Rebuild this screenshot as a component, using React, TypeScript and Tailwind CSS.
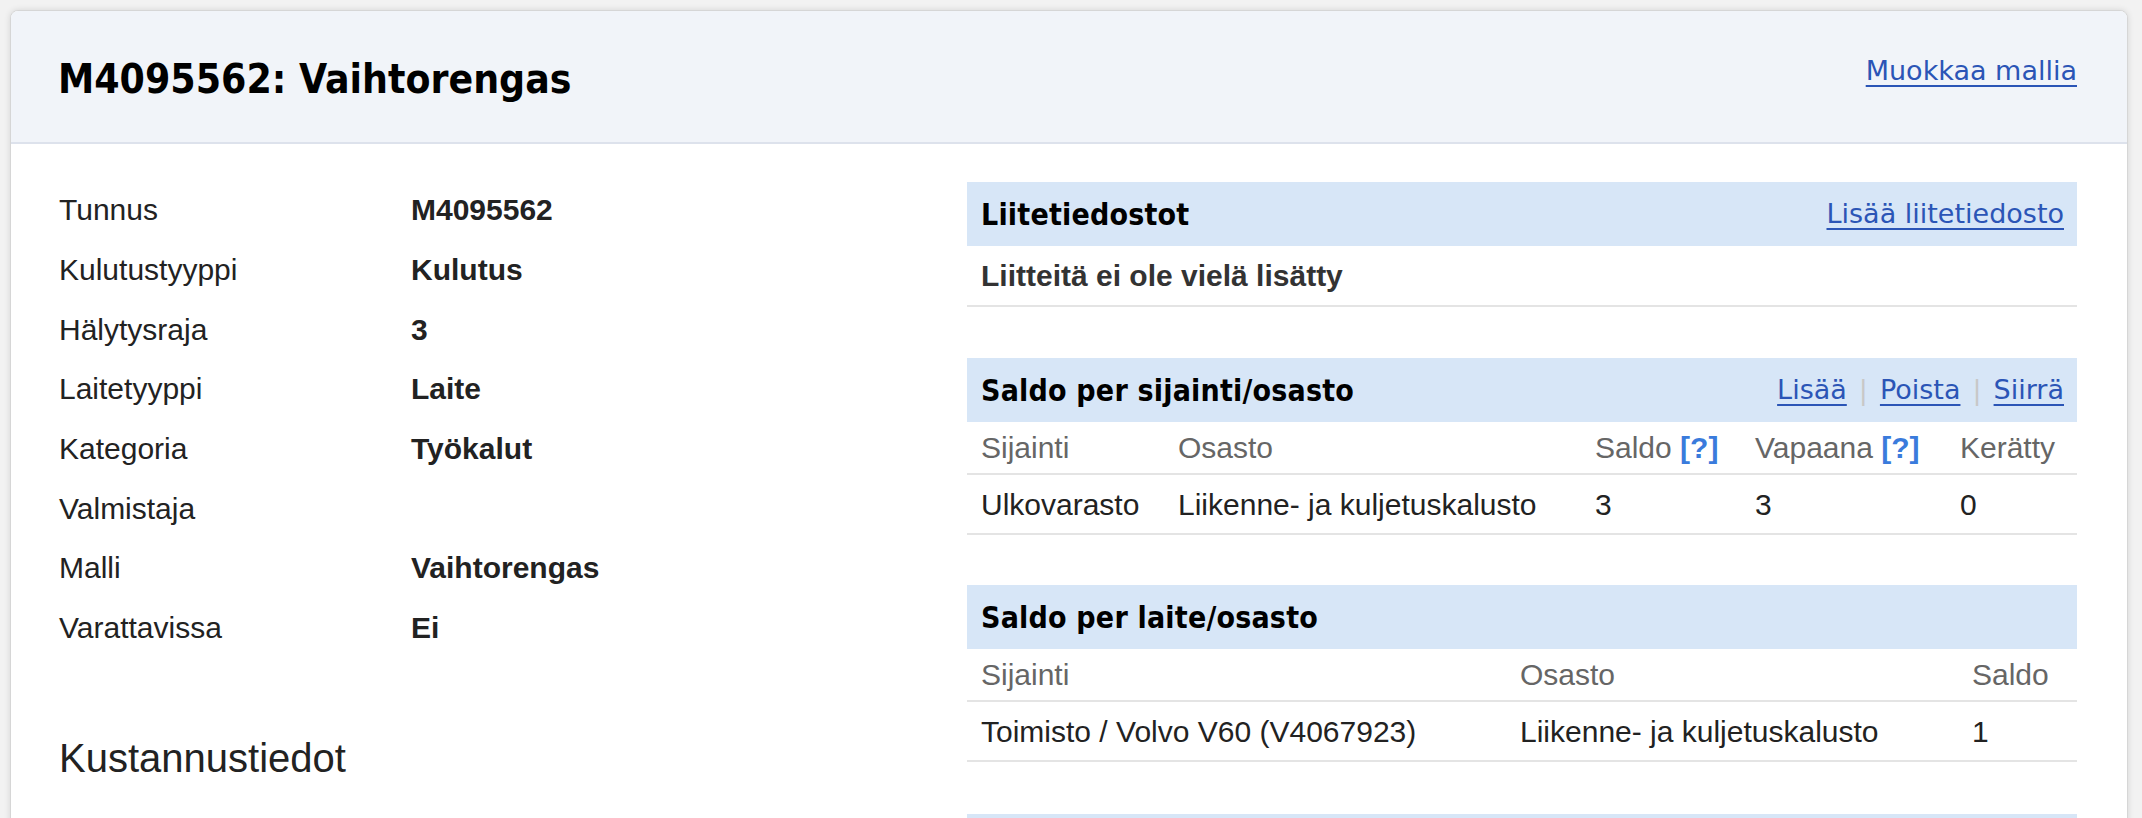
import React from "react";

const body = "font-['Liberation_Sans','Arial',sans-serif]";
const cond = "font-['DejaVu_Sans_Condensed','DejaVu_Sans',sans-serif] font-stretch-condensed";
const verd = "font-['DejaVu_Sans','Verdana',sans-serif]";

const info: [string, string][] = [
  ["Tunnus", "M4095562"],
  ["Kulutustyyppi", "Kulutus"],
  ["Hälytysraja", "3"],
  ["Laitetyyppi", "Laite"],
  ["Kategoria", "Työkalut"],
  ["Valmistaja", ""],
  ["Malli", "Vaihtorengas"],
  ["Varattavissa", "Ei"],
];

function Link({ children }: { children: React.ReactNode }) {
  return (
    <a href="#" className={`${verd} text-[27px] text-[#2b55b6] underline decoration-[2px] underline-offset-[5px]`}>
      {children}
    </a>
  );
}

function Bar({ title, right }: { title: string; right?: React.ReactNode }) {
  return (
    <div className="h-[64px] bg-[#d7e6f7] flex items-center justify-between pl-[14px] pr-[13px]">
      <div className={`${cond} font-bold text-[30px] text-black tracking-[0.2px]`}>{title}</div>
      {right ? <div className="flex items-center">{right}</div> : null}
    </div>
  );
}

function Sep() {
  return <span className={`${verd} text-[27px] text-[#c8c8c8] mx-[12px]`}>|</span>;
}

function Q() {
  return <span className="font-bold text-[#3a7bdc]">[?]</span>;
}

export default function App() {
  return (
    <div className={`min-h-[818px] bg-[#f2f2f2] pt-[10px] pl-[10px] pr-[14px] ${body}`}>
      <div className="bg-white border border-[#d6d6d6] rounded-t-[8px] shadow-[0_0_6px_rgba(0,0,0,0.12)] min-h-[808px] overflow-hidden">
        <div className="h-[133px] bg-[#f1f4f9] border-b-2 border-[#dde2ec] flex items-center justify-between pl-[47px] pr-[50px]">
          <h1 className={`${cond} font-bold text-[40.5px] text-black leading-none pt-[6px]`}>M4095562: Vaihtorengas</h1>
          <div className="-mt-[10px]">
            <Link>Muokkaa mallia</Link>
          </div>
        </div>

        <div className="grid grid-cols-[1fr_1110px] gap-[50px] pl-[48px] pr-[50px] pt-[38px]">
          <div className="-mt-[2px]">
            {info.map(([k, v]) => (
              <div key={k} className="h-[59.7px] flex items-center text-[30px] text-[#222]">
                <div className="w-[352px]">{k}</div>
                <div className="font-bold">{v}</div>
              </div>
            ))}
            <h3 className="mt-[77px] text-[40px] text-[#222] leading-[46px]">Kustannustiedot</h3>
          </div>

          <div>
            <Bar title="Liitetiedostot" right={<Link>Lisää liitetiedosto</Link>} />
            <div className="h-[61px] border-b-2 border-[#e4e4e4] flex items-center pl-[14px] text-[30px] font-bold text-[#333]">
              Liitteitä ei ole vielä lisätty
            </div>

            <div className="mt-[51px]">
              <Bar
                title="Saldo per sijainti/osasto"
                right={
                  <>
                    <Link>Lisää</Link>
                    <Sep />
                    <Link>Poista</Link>
                    <Sep />
                    <Link>Siirrä</Link>
                  </>
                }
              />
              <table className="w-full table-fixed border-collapse text-[30px]">
                <colgroup>
                  <col className="w-[197px]" />
                  <col className="w-[417px]" />
                  <col className="w-[160px]" />
                  <col className="w-[205px]" />
                  <col className="w-[131px]" />
                </colgroup>
                <thead>
                  <tr className="h-[52px] border-b-2 border-[#e4e4e4] text-[#666] text-left">
                    <th className="font-normal pl-[14px]">Sijainti</th>
                    <th className="font-normal pl-[14px]">Osasto</th>
                    <th className="font-normal pl-[14px] whitespace-nowrap">Saldo <Q /></th>
                    <th className="font-normal pl-[14px] whitespace-nowrap">Vapaana <Q /></th>
                    <th className="font-normal pl-[14px]">Kerätty</th>
                  </tr>
                </thead>
                <tbody>
                  <tr className="h-[60px] border-b-2 border-[#e4e4e4] text-[#222]">
                    <td className="pl-[14px]">Ulkovarasto</td>
                    <td className="pl-[14px] whitespace-nowrap">Liikenne- ja kuljetuskalusto</td>
                    <td className="pl-[14px]">3</td>
                    <td className="pl-[14px]">3</td>
                    <td className="pl-[14px]">0</td>
                  </tr>
                </tbody>
              </table>
            </div>

            <div className="mt-[50px]">
              <Bar title="Saldo per laite/osasto" />
              <table className="w-full table-fixed border-collapse text-[30px]">
                <colgroup>
                  <col className="w-[539px]" />
                  <col className="w-[452px]" />
                  <col className="w-[119px]" />
                </colgroup>
                <thead>
                  <tr className="h-[52px] border-b-2 border-[#e4e4e4] text-[#666] text-left">
                    <th className="font-normal pl-[14px]">Sijainti</th>
                    <th className="font-normal pl-[14px]">Osasto</th>
                    <th className="font-normal pl-[14px]">Saldo</th>
                  </tr>
                </thead>
                <tbody>
                  <tr className="h-[60px] border-b-2 border-[#e4e4e4] text-[#222]">
                    <td className="pl-[14px]">Toimisto / Volvo V60 (V4067923)</td>
                    <td className="pl-[14px] whitespace-nowrap">Liikenne- ja kuljetuskalusto</td>
                    <td className="pl-[14px]">1</td>
                  </tr>
                </tbody>
              </table>
            </div>

            <div className="mt-[52px]">
              <Bar title="" />
            </div>
          </div>
        </div>
      </div>
    </div>
  );
}
